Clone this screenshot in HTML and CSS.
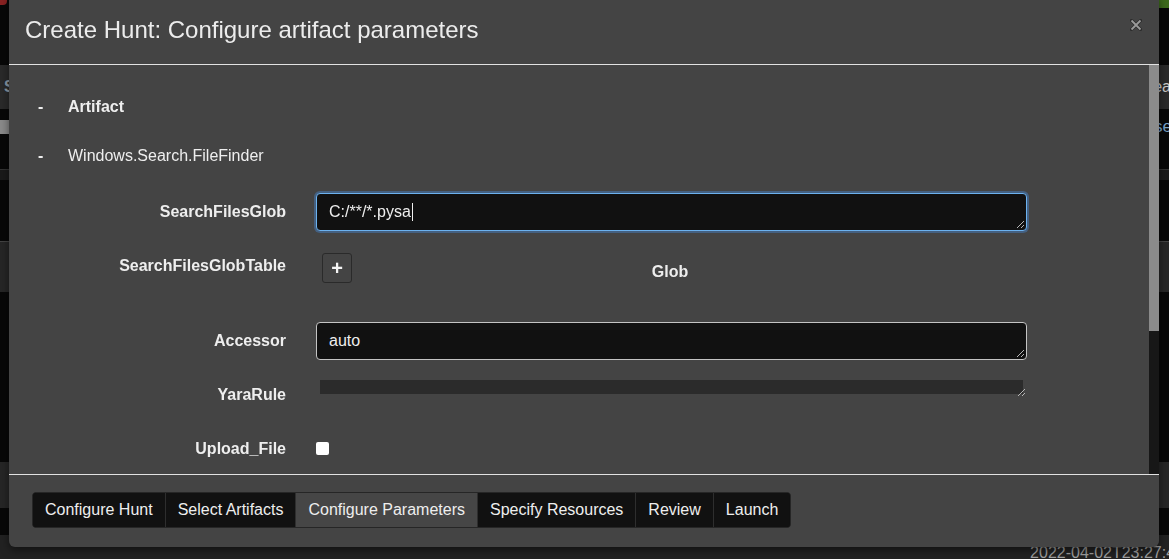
FILE: index.html
```html
<!DOCTYPE html>
<html lang="en">
<head>
<meta charset="utf-8">
<title>Create Hunt</title>
<link rel="stylesheet" href="styles.css">
</head>
<body>
<div class="page">
  <div class="topbar">
    <span class="topbar-icon"></span>
    <span class="topbar-green"></span>
  </div>
  <div class="toolbar">
    <span class="toolbar-left">S</span>
    <span class="toolbar-right">ea</span>
  </div>
  <div class="subrow">
    <span class="subrow-block"></span>
    <span class="subrow-text">se</span>
  </div>
  <div class="band"></div>
  <div class="panel panel-a"></div>
  <div class="panel panel-b"></div>
  <div class="statusbar"><span class="timestamp">2022-04-02T23:27:45</span></div>
</div>

<div class="modal">
  <div class="modal-header">
    <h4 class="modal-title">Create Hunt: Configure artifact parameters</h4>
    <button class="close" type="button" aria-label="Close">
      <svg width="12" height="12" viewBox="0 0 12 12"><path d="M1.5 1.5 L10.5 10.5 M10.5 1.5 L1.5 10.5" stroke="#000" stroke-width="3.2" stroke-linecap="square" opacity="0.35"/><path d="M1.5 1.5 L10.5 10.5 M10.5 1.5 L1.5 10.5" stroke="#9a9a9a" stroke-width="1.8"/></svg>
    </button>
  </div>
  <div class="modal-body">
    <div class="body-content">
      <div class="section-row">
        <span class="dash">-</span>
        <span class="section-title">Artifact</span>
      </div>
      <div class="section-row">
        <span class="dash">-</span>
        <span class="section-name">Windows.Search.FileFinder</span>
      </div>

      <div class="param-row row-glob">
        <label class="param-label">SearchFilesGlob</label>
        <div class="field field-focused">
          <span class="field-text">C:/**/*.pysa</span><span class="caret"></span>
          <svg class="grip" width="9" height="9" viewBox="0 0 9 9"><path d="M1 8 L8 1 M5 8 L8 5" stroke="#b5b5b5" stroke-width="1"/></svg>
        </div>
      </div>

      <div class="param-row row-table">
        <label class="param-label">SearchFilesGlobTable</label>
        <div class="table-value">
          <button class="add-btn" type="button">+</button>
          <div class="table-head">Glob</div>
        </div>
      </div>

      <div class="param-row row-accessor">
        <label class="param-label">Accessor</label>
        <div class="field">
          <span class="field-text">auto</span>
          <svg class="grip" width="9" height="9" viewBox="0 0 9 9"><path d="M1 8 L8 1 M5 8 L8 5" stroke="#b5b5b5" stroke-width="1"/></svg>
        </div>
      </div>

      <div class="param-row row-yara">
        <label class="param-label">YaraRule</label>
        <div class="collapsed-area">
          <div class="collapsed-bar"></div>
          <svg class="grip grip-yara" width="9" height="9" viewBox="0 0 9 9"><path d="M1 8 L8 1 M5 8 L8 5" stroke="#b5b5b5" stroke-width="1"/></svg>
        </div>
      </div>

      <div class="param-row row-upload">
        <label class="param-label">Upload_File</label>
        <span class="checkbox"></span>
      </div>
    </div>
    <div class="scrollbar"><div class="scroll-thumb"></div></div>
  </div>
  <div class="modal-footer">
    <div class="btn-group">
      <button class="step" type="button">Configure Hunt</button>
      <button class="step" type="button">Select Artifacts</button>
      <button class="step step-active" type="button">Configure Parameters</button>
      <button class="step" type="button">Specify Resources</button>
      <button class="step" type="button">Review</button>
      <button class="step" type="button">Launch</button>
    </div>
  </div>
</div>
</body>
</html>
```

FILE: styles.css
```css
* { box-sizing: border-box; }

html, body {
  margin: 0;
  padding: 0;
  height: 100%;
}

body {
  background: #080808;
  font-family: "Liberation Sans", Arial, sans-serif;
  color: #eeeeee;
  overflow: hidden;
}

/* ---------- backdrop page ---------- */
.page {
  height: 100vh;
  display: flex;
  flex-direction: column;
}

.topbar {
  height: 8px;
  display: flex;
  justify-content: space-between;
}

.topbar-icon {
  width: 7px;
  height: 5px;
  background: #8a2222;
  border-radius: 0 0 4px 0;
}

.topbar-green {
  width: 14px;
  height: 8px;
  background: #3d6a1c;
}

.toolbar {
  margin-top: 57px;
  height: 44px;
  background: #2a2a2a;
  display: flex;
  justify-content: space-between;
  align-items: center;
  font-size: 16px;
  font-weight: bold;
  color: #8c9aa6;
  padding: 0 0 0 4px;
}

.toolbar-right {
  color: #c9c9c9;
  font-weight: normal;
  margin-right: -2px;
}

.subrow {
  height: 60px;
  display: flex;
  justify-content: space-between;
  align-items: flex-start;
}

.subrow-block {
  margin-top: 11px;
  width: 9px;
  height: 14px;
  background: #8a8a8a;
}

.subrow-text {
  margin-top: 8px;
  font-size: 17px;
  color: #7aa4c8;
  margin-right: -3px;
}

.band {
  height: 11px;
  border-top: 1px solid #333;
  background: #1a1a1a;
}

.panel {
  background: #262626;
}

.panel-a {
  margin-top: 61px;
  height: 51px;
  border-top: 1px solid #444;
}

.panel-b {
  margin-top: 170px;
  height: 46px;
}

.statusbar {
  margin-top: auto;
  height: 24px;
  background: #222222;
  padding-top: 9px;
  text-align: right;
  white-space: nowrap;
  overflow: hidden;
}

.timestamp {
  display: inline-block;
  font-size: 16px;
  line-height: 18px;
  color: #a0a0a0;
  margin-right: -15px;
}

/* ---------- modal ---------- */
.modal {
  position: fixed;
  left: 9px;
  top: -6px;
  width: 1150px;
  height: 553px;
  background: #444444;
  border-radius: 6px;
  display: flex;
  flex-direction: column;
  overflow: hidden;
  box-shadow: 0 3px 9px rgba(0, 0, 0, 0.5);
}

.modal-header {
  height: 71px;
  flex: none;
  border-bottom: 1px solid #e2e2e2;
  display: flex;
  justify-content: space-between;
  align-items: flex-start;
  padding: 23px 16px 0 16px;
}

.modal-title {
  margin: 0;
  font-size: 24px;
  line-height: 26px;
  font-weight: normal;
  color: #ececec;
}

.close {
  margin: 2px 1px 0 0;
  padding: 0;
  border: 0;
  background: transparent;
  width: 12px;
  height: 12px;
  display: flex;
}

.modal-body {
  height: 409px;
  flex: none;
  display: flex;
}

.body-content {
  flex: 1;
  padding-top: 17px;
  overflow: hidden;
}

.scrollbar {
  width: 10px;
  background: #171717;
  flex: none;
}

.scroll-thumb {
  height: 266px;
  background: #8b8b8b;
}

/* sections */
.section-row {
  height: 49px;
  display: flex;
  align-items: center;
  font-size: 16px;
  color: #eeeeee;
}

.dash {
  width: 30px;
  margin-left: 29px;
  font-weight: bold;
}

.section-title {
  font-weight: bold;
}

/* params */
.param-row {
  display: flex;
  align-items: center;
  gap: 30px;
}

.param-label {
  width: 277px;
  flex: none;
  text-align: right;
  font-size: 16px;
  font-weight: bold;
  line-height: 24px;
  color: #eeeeee;
}

.row-glob { margin-top: 13px; }

.field {
  position: relative;
  width: 711px;
  height: 38px;
  background: #111111;
  border: 1px solid #c4c4c4;
  border-radius: 4px;
  padding: 0 12px;
  display: flex;
  align-items: center;
  font-size: 16px;
  color: #eeeeee;
}

.field-focused {
  border-color: #6cb2ef;
  box-shadow: 0 0 0 2px rgba(70, 120, 180, 0.55);
}

.field-text {
  white-space: pre;
}

.caret {
  width: 1px;
  height: 18px;
  background: #f0f0f0;
  margin-left: 1px;
}

.grip {
  position: absolute;
  right: 1px;
  bottom: 1px;
}

.row-table {
  margin-top: 22px;
  align-items: flex-start;
}

.row-table .param-label {
  padding-top: 1px;
}

.table-value {
  display: flex;
  align-items: flex-start;
  height: 47px;
}

.add-btn {
  margin-left: 6px;
  width: 30px;
  height: 30px;
  border: 1px solid #2a2a2a;
  border-radius: 3px;
  background: #444444;
  color: #f4f4f4;
  font-family: "Liberation Sans", Arial, sans-serif;
  font-size: 20px;
  font-weight: bold;
  line-height: 26px;
  padding: 0;
  text-align: center;
}

.table-head {
  width: 636px;
  text-align: center;
  font-size: 16px;
  font-weight: bold;
  line-height: 24px;
  padding-top: 7px;
  color: #eeeeee;
}

.row-accessor { margin-top: 22px; }

.row-yara {
  margin-top: 20px;
  align-items: flex-start;
}

.row-yara .param-label {
  padding-top: 3px;
  line-height: 24px;
}

.collapsed-area {
  position: relative;
  width: 711px;
  height: 17px;
  padding: 0 4px;
}

.collapsed-bar {
  height: 14px;
  background: #2b2b2b;
}

.grip-yara {
  right: 1px;
  bottom: 0;
}

.row-upload {
  margin-top: 28px;
  align-items: flex-start;
}

.row-upload .param-label {
  padding-top: 2px;
}

.checkbox {
  width: 13px;
  height: 13px;
  background: #ffffff;
  border-radius: 2px;
  margin-top: 7px;
}

/* footer */
.modal-footer {
  flex: 1;
  border-top: 1px solid #e2e2e2;
  padding: 17px 0 0 23px;
}

.btn-group {
  display: inline-flex;
  height: 36px;
  border: 1px solid #262626;
  border-radius: 4px;
  overflow: hidden;
  background: #111111;
}

.step {
  border: 0;
  border-left: 1px solid #2e2e2e;
  background: #111111;
  color: #eeeeee;
  font-family: "Liberation Sans", Arial, sans-serif;
  font-size: 16px;
  padding: 0 12px;
  height: 100%;
}

.step:first-child {
  border-left: 0;
}

.step-active {
  background: #464646;
}
```
